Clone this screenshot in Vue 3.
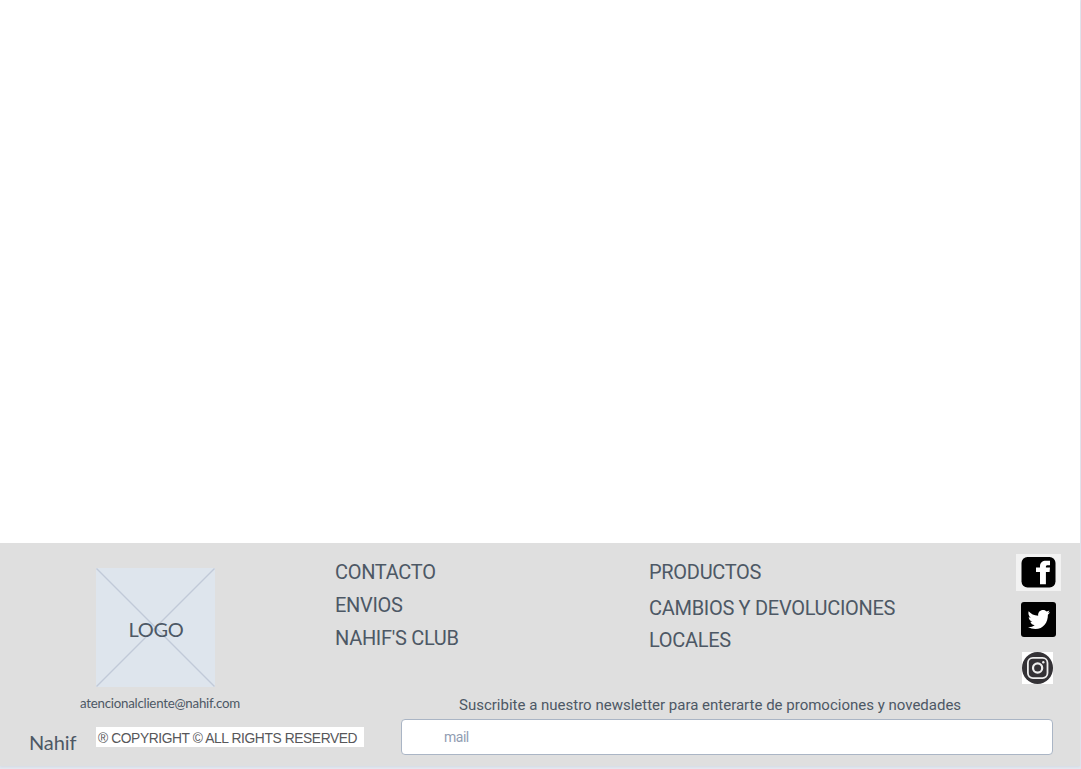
<script setup>
const companyLinks = ['CONTACTO', 'ENVIOS', "NAHIF'S CLUB"]
const shopLinks = ['PRODUCTOS', 'CAMBIOS Y DEVOLUCIONES', 'LOCALES']
</script>

<template>
  <div class="frame">
    <div class="page">
      <main class="content"></main>
      <footer class="footer">
        <section class="brand">
          <div class="logo">
            <svg class="cross" viewBox="0 0 119 119" aria-hidden="true">
              <path d="M.5 .5 118.500 118.500M118.500 .5 .5 118.500" />
            </svg>
            <span class="logo-text">LOGO</span>
          </div>
          <a class="email">atencionalcliente@nahif.com</a>
          <div class="legal">
            <span class="name">Nahif</span>
            <span class="copyright">® COPYRIGHT © ALL RIGHTS RESERVED</span>
          </div>
        </section>
        <section class="main">
          <div class="top">
            <nav class="links company">
              <a v-for="link in companyLinks" :key="link">{{ link }}</a>
            </nav>
            <nav class="links shop">
              <a v-for="link in shopLinks" :key="link">{{ link }}</a>
            </nav>
            <div class="social">
              <svg class="facebook" width="45" height="37" viewBox="0 0 45 37">
                <path fill="#f2f2f2" d="M0 0h45v37H0z" />
                <rect x="5.500" y="3" width="34" height="30.500" rx="6" fill="#000" />
                <path fill="#fff" d="M24 30.300V18H20v-4.600h4v-1c0-3.900 2.300-5.700 6-5.700h4v4.500h-2.200c-1.400 0-1.900.5-1.900 1.500v.7H34L33.600 18h-3.700v12.300z" />
              </svg>
              <svg class="twitter" width="35" height="35" viewBox="0 0 35 35">
                <rect width="35" height="35" rx="3" fill="#000" />
                <path fill="#fff" d="M7.600 9.200c2.500 2.800 5.300 4.200 9.600 4.500-.5-3.300 1.900-5.700 4.900-5.700 1.500 0 2.700.6 3.600 1.500 1-.2 1.900-.5 2.700-1-.3 1-.8 1.700-1.500 2.200.8 0 1.500-.2 2.200-.5-.6 1-1.400 1.800-2.200 2.500C27 20.500 22.300 27 14.400 27c-2.700 0-5.200-.6-7.400-1.900 2.700.1 4.800-.5 6.700-1.900-2.200-.2-3.700-1.400-4.400-3.400h2.100c-2.200-.7-3.700-2.400-3.700-4.700.7.300 1.300.5 2.100.6-2.100-1.600-2.800-4-2.200-6.500z" />
              </svg>
              <svg class="instagram" width="31" height="32" viewBox="0 0 31 32">
                <path fill="#fff" d="M0 0h31v32H0z" />
                <ellipse cx="15.500" cy="16" rx="15.500" ry="16" fill="#343236" />
                <g fill="none" stroke="#eee">
                  <rect x="5.900" y="5.900" width="19.600" height="20.200" rx="5" stroke-width="1.800" />
                  <circle cx="15.600" cy="16" r="4.600" stroke-width="2.200" />
                </g>
                <circle cx="21.300" cy="10.200" r="1.200" fill="#eee" />
              </svg>
            </div>
          </div>
          <form class="newsletter" @submit.prevent>
            <label class="caption" for="mail">Suscribite a nuestro newsletter para enterarte de promociones y novedades</label>
            <input id="mail" class="mail" type="email" placeholder="mail" />
          </form>
        </section>
      </footer>
    </div>
  </div>
</template>

<style>
body {
  margin: 0;
  background: #e3e8f0;
}
</style>

<style scoped>
.frame {
  height: 769px;
  overflow: hidden;
  background: #e3e8f0;
}
.page {
  display: flex;
  flex-direction: column;
  width: 1080px;
  height: 766px;
  background: #fff;
  color: #4d5865;
  box-shadow: 0 1px 2px #d3dae4;
}
.content {
  flex: 1;
}
.footer {
  display: flex;
  height: 223px;
  background: #dfdfdf;
}
.brand {
  width: 335px;
  flex: none;
  font-family: Lato, sans-serif;
}
.logo {
  display: grid;
  width: 119px;
  height: 119px;
  margin: 25px 0 0 96px;
  background: #dee5ed;
}
.cross,
.logo-text {
  grid-area: 1 / 1;
}
.cross {
  fill: none;
  stroke: #c1c9d8;
  stroke-width: 1.400;
}
.logo-text {
  z-index: 1;
  place-self: center;
  padding: 2px 0 0 1px;
  font-size: 20px;
  line-height: 24px;
  letter-spacing: -0.35px;
}
.email {
  display: block;
  margin: 7px 0 0 80px;
  font-size: 13.300px;
  line-height: 18px;
  letter-spacing: -0.25px;
}
.legal {
  display: flex;
  margin: 15px 0 0 29px;
}
.name {
  flex: none;
  width: 67px;
  padding-top: 3px;
  font-size: 20px;
  line-height: 24px;
  letter-spacing: -0.1px;
}
.copyright {
  box-sizing: border-box;
  flex: none;
  width: 268px;
  height: 20px;
  padding: 3px 0 0 2px;
  background: #fff;
  color: #57575a;
  font: 13.800px/18px "Liberation Sans", Arial, sans-serif;
  letter-spacing: -0.400px;
  white-space: nowrap;
}
.main {
  flex: 1;
  font-family: Roboto, sans-serif;
}
.top {
  display: flex;
  height: 152px;
}
.links {
  display: flex;
  flex-direction: column;
  box-sizing: border-box;
  padding-top: 17px;
  font-size: 20px;
  line-height: 24px;
  letter-spacing: -0.3px;
}
.company {
  width: 314px;
  gap: 9px;
}
.shop {
  width: 367px;
  gap: 8px;
}
.shop a:first-child {
  margin-bottom: 4px;
}
.social {
  display: flex;
  flex-direction: column;
  align-items: flex-start;
  padding-top: 11px;
}
.twitter {
  margin: 11px 0 15px 5px;
}
.instagram {
  margin-left: 6px;
}
.newsletter {
  width: 652px;
  margin-left: 66px;
}
.caption {
  display: block;
  height: 24px;
  padding-left: 58px;
  font-size: 15px;
  line-height: 20px;
  white-space: nowrap;
}
.mail {
  display: block;
  box-sizing: border-box;
  width: 652px;
  height: 36px;
  padding: 0 42px;
  border: 1px solid #aab5c5;
  border-radius: 4px;
  background: #fff;
  font: 14px/20px Roboto, sans-serif;
  letter-spacing: -0.500px;
}
.mail::placeholder {
  color: #919db2;
  opacity: 1;
}
</style>
